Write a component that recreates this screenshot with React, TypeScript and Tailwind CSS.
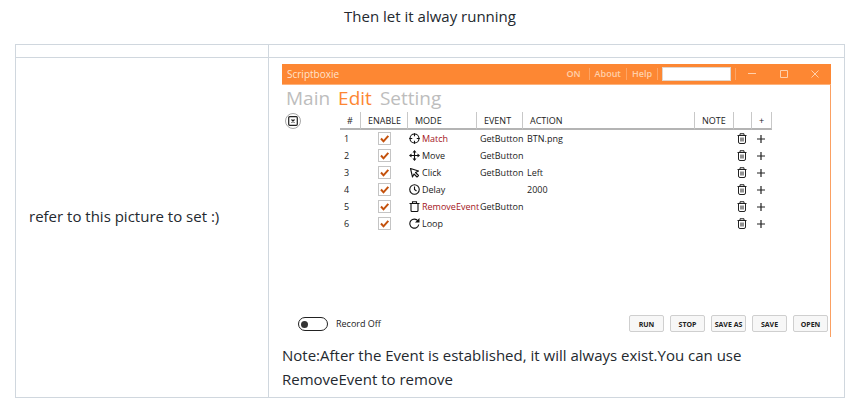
import { useState } from 'react';
import type { ReactNode } from 'react';

type Mode = 'Match' | 'Move' | 'Click' | 'Delay' | 'RemoveEvent' | 'Loop';

interface Step {
  mode: Mode;
  event: string;
  action: string;
}

const steps: Step[] = [
  { mode: 'Match', event: 'GetButton', action: 'BTN.png' },
  { mode: 'Move', event: 'GetButton', action: '' },
  { mode: 'Click', event: 'GetButton', action: 'Left' },
  { mode: 'Delay', event: '', action: '2000' },
  { mode: 'RemoveEvent', event: 'GetButton', action: '' },
  { mode: 'Loop', event: '', action: '' },
];

const modeShapes: Record<Mode, ReactNode> = {
  Match: (
    <>
      <circle cx="11" cy="11" r="9" />
      <path d="M11 0.500v6M11 15.500v6M0.500 11h6M15.500 11h6" />
    </>
  ),
  Move: (
    <>
      <path d="M11 3v16M3 11h16" />
      <path d="M11 0l4 5H7zM11 22l4-5H7zM0 11l5-4v8zM22 11l-5-4v8z" fill="currentColor" stroke="none" />
    </>
  ),
  Click: <path d="M3 3l16 5-6 3 6 6-3 3-6-6-3 6z" strokeLinejoin="round" />,
  Delay: (
    <>
      <circle cx="11" cy="11" r="9.5" />
      <path d="M11 5v6l4 3" />
    </>
  ),
  RemoveEvent: <path d="M1 5h20M7 4V1.500h8V4M4 5v14q0 2 2 2h10q2 0 2-2V5" />,
  Loop: (
    <>
      <path d="M18 6a9 9 0 1 0 1.500 7" />
      <path d="M21 0v9h-9z" fill="currentColor" stroke="none" />
    </>
  ),
};

function ModeIcon({ mode }: { mode: Mode }) {
  return (
    <svg viewBox="0 0 22 22" className="size-[11px] shrink-0 text-[#111]" fill="none" stroke="currentColor" strokeWidth="2.2" aria-hidden="true">
      {modeShapes[mode]}
    </svg>
  );
}

function TrashIcon() {
  return (
    <svg viewBox="0 0 20 22" className="h-[11px] w-[10px]" fill="none" stroke="#222" strokeWidth="2" aria-hidden="true">
      <path d="M1 5h18M6 5V1.500h8V5M3 5v13q0 3 3 3h8q3 0 3-3V5M8 9v8M12 9v8" />
    </svg>
  );
}

function PlusIcon() {
  return (
    <svg viewBox="0 0 8 8" className="size-2" stroke="#222" strokeWidth="1.2" aria-hidden="true">
      <path d="M4 0v8M0 4h8" />
    </svg>
  );
}

function EnableBox({ row }: { row: number }) {
  const [on, setOn] = useState(true);
  return (
    <span className="mx-auto grid size-[13px]">
      <input
        type="checkbox"
        aria-label={`Enable row ${row}`}
        checked={on}
        onChange={() => setOn(!on)}
        className="col-start-1 row-start-1 size-[13px] appearance-none border border-[#c4c4c4] bg-white"
      />
      {on && (
        <svg viewBox="0 0 13 13" className="pointer-events-none col-start-1 row-start-1 size-[13px]" fill="none" stroke="#c4510c" strokeWidth="2" aria-hidden="true">
          <path d="M3 6.500l2.500 2.800L10.300 3.800" />
        </svg>
      )}
    </span>
  );
}

function TitleBar() {
  const item = 'border-r border-[#fda566] px-[5px] leading-3';
  return (
    <div className="flex h-[21px] items-center border-b border-[#fdb27c] bg-[#fd8733] text-[#ffd0ab]">
      <span className="flex-1 pl-[5px] text-[10px] text-[#ffe3cd]">Scriptboxie</span>
      <div className="flex items-center text-[9px] font-semibold">
        <button className="border-r border-[#fda566] px-2 leading-3">ON</button>
        <button className={item}>About</button>
        <button className={item}>Help</button>
        <input aria-label="Script name" className="mx-1 h-[14px] w-[69px] border border-[#e0d6ce] bg-white px-1 text-black" />
      </div>
      <div className="flex h-3 w-24 items-center justify-between border-l border-[#fda566] px-3">
        <button aria-label="Minimize">
          <svg viewBox="0 0 8 8" className="size-2" stroke="currentColor"><path d="M0 3.500h8" /></svg>
        </button>
        <button aria-label="Maximize">
          <svg viewBox="0 0 8 8" className="size-2" fill="none" stroke="currentColor"><path d="M.5 .5h7v7h-7z" /></svg>
        </button>
        <button aria-label="Close">
          <svg viewBox="0 0 8 8" className="size-2" stroke="currentColor"><path d="M.5 .5l7 7M7.500 .5l-7 7" /></svg>
        </button>
      </div>
    </div>
  );
}

function StepTable() {
  const th = 'h-[18px] border-r border-b-2 border-r-[#c8c8c8] border-b-[#b4b4b4] pt-0.5 text-left font-medium';
  return (
    <table className="w-full table-fixed border-separate border-spacing-0 text-[9px] leading-3 text-[#222]">
      <colgroup>
        <col className="w-[21px]" />
        <col className="w-[47px]" />
        <col className="w-[69px]" />
        <col className="w-[46px]" />
        <col />
        <col className="w-[39px]" />
        <col className="w-[18px]" />
        <col className="w-[20px]" />
      </colgroup>
      <thead>
        <tr>
          <th className={`${th} pl-[7px]`}>#</th>
          <th className={`${th} pl-[7px]`}>ENABLE</th>
          <th className={`${th} pl-[7px]`}>MODE</th>
          <th className={`${th} pl-[7px]`}>EVENT</th>
          <th className={`${th} pl-[7px]`}>ACTION</th>
          <th className={`${th} pl-[7px]`}>NOTE</th>
          <th className={th} aria-label="Delete" />
          <th className={`${th} pl-[7px]`}>+</th>
        </tr>
      </thead>
      <tbody>
        {steps.map((step, i) => (
          <tr key={step.mode} className="h-[17px]">
            <td className="pl-1">{i + 1}</td>
            <td><EnableBox row={i + 1} /></td>
            <td className="pl-px">
              <span className="flex items-center gap-0.5">
                <ModeIcon mode={step.mode} />
                <span className={step.mode === 'Match' || step.mode === 'RemoveEvent' ? 'text-[#a3161c]' : ''}>{step.mode}</span>
              </span>
            </td>
            <td className="pl-[3px]">{step.event}</td>
            <td className="pl-1">{step.action}</td>
            <td />
            <td className="pl-[3px]">
              <button className="block" aria-label={`Delete row ${i + 1}`}><TrashIcon /></button>
            </td>
            <td className="pl-[5px]">
              <button className="block" aria-label={`Add below row ${i + 1}`}><PlusIcon /></button>
            </td>
          </tr>
        ))}
      </tbody>
    </table>
  );
}

function ScriptWindow() {
  const [record, setRecord] = useState(false);
  return (
    <div>
      <TitleBar />
      <div className="border-r border-[#fba062]">
        <nav className="flex gap-2 pl-1 text-[19px] leading-[27px] text-[#bdbdbd]">
          <button>Main</button>
          <button className="text-[#fd8733]">Edit</button>
          <button>Setting</button>
        </nav>
        <div className="flex h-[203px] items-start pr-[58px] pl-[3px]">
          <button aria-label="Clear" className="mt-px mr-[39px] grid size-4 shrink-0 place-items-center rounded-full border border-[#a8a8a8]">
            <svg viewBox="0 0 10 10" className="size-[10px]" fill="none" stroke="#222" aria-hidden="true">
              <rect x=".7" y=".7" width="8.6" height="8.6" rx="1" strokeWidth="1.2" />
              <path d="M3.500 3.500l3 3M6.500 3.500l-3 3" strokeWidth="1.2" />
            </svg>
          </button>
          <StepTable />
        </div>
        <div className="flex h-[22px] items-start justify-between pr-0.5 pl-4">
          <label className="flex items-center gap-2 pt-0.5 text-[9px] leading-[14px] text-[#222]">
            <span className="grid items-center">
              <input
                type="checkbox"
                role="switch"
                checked={record}
                onChange={() => setRecord(!record)}
                className="col-start-1 row-start-1 h-[14px] w-[30px] appearance-none rounded-full border border-[#222]"
              />
              <span className={`pointer-events-none col-start-1 row-start-1 size-[7px] rounded-full bg-[#333] ${record ? 'ml-5' : 'ml-[3px]'}`} />
            </span>
            Record {record ? 'On' : 'Off'}
          </label>
          <div className="flex gap-1.5">
            {['RUN', 'STOP', 'SAVE AS', 'SAVE', 'OPEN'].map((name) => (
              <button key={name} className="h-[17px] w-[35px] rounded-[2px] border border-[#cfcfcf] bg-[#f7f7f7] pt-0.5 text-[7px] leading-[13px] font-bold whitespace-nowrap text-[#222]">
                {name}
              </button>
            ))}
          </div>
        </div>
      </div>
    </div>
  );
}

export default function App() {
  return (
    <main className="bg-white pr-[17px] pl-[15px] font-['Open_Sans','Noto_Sans',sans-serif] text-[15px] leading-6 text-[#24292f]">
      <p className="pt-1 pb-4 text-center">Then let it alway running</p>
      <table className="w-full table-fixed border-collapse">
        <colgroup>
          <col className="w-[253px]" />
          <col />
        </colgroup>
        <thead>
          <tr className="h-[13px]">
            <th className="border border-[#d0d7de]" aria-label="Description" />
            <th className="border border-[#d0d7de]" aria-label="Picture" />
          </tr>
        </thead>
        <tbody>
          <tr>
            <td className="border border-[#d0d7de] px-[13px] pb-6">refer to this picture to set :)</td>
            <td className="border border-[#d0d7de] px-[13px] py-1.5">
              <ScriptWindow />
              <p className="pt-1.5">
                Note:After the Event is established, it will always exist.You can use RemoveEvent to remove
              </p>
            </td>
          </tr>
        </tbody>
      </table>
    </main>
  );
}
